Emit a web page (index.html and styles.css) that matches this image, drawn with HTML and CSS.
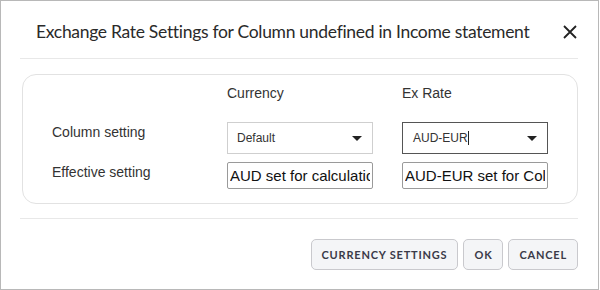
FILE: index.html
```html
<!DOCTYPE html>
<html lang="en">
<head>
    <meta charset="UTF-8">
    <title>Exchange Rate Settings</title>
    <link rel="stylesheet" href="styles.css">
</head>
<body>
    <div class="dialog">
        <div class="dialog-header">
            <h1>Exchange Rate Settings for Column undefined in Income statement</h1>
            <button class="close-btn" aria-label="Close">
                <svg width="14" height="14" viewBox="0 0 14 14">
                    <path d="M1 1 L13 13 M13 1 L1 13" stroke="#222" stroke-width="1.8" fill="none"/>
                </svg>
            </button>
        </div>

        <div class="panel">
            <div class="grid">
                <div></div>
                <div class="col-title">Currency</div>
                <div class="col-title">Ex Rate</div>

                <div class="row-label">Column setting</div>
                <div class="select">
                    <span>Default</span>
                    <span class="caret"></span>
                </div>
                <div class="select focused">
                    <span>AUD-EUR<i class="cursor"></i></span>
                    <span class="caret"></span>
                </div>

                <div class="row-label">Effective setting</div>
                <input class="field" type="text" value="AUD set for calculation" readonly>
                <input class="field" type="text" value="AUD-EUR set for Column" readonly>
            </div>
        </div>

        <div class="dialog-footer">
            <button class="btn">CURRENCY SETTINGS</button>
            <button class="btn">OK</button>
            <button class="btn">CANCEL</button>
        </div>
    </div>
</body>
</html>
```

FILE: styles.css
```css
* {
    margin: 0;
    padding: 0;
    box-sizing: border-box;
}

body {
    background: #ffffff;
    font-family: "Liberation Sans", Arial, sans-serif;
    color: #333333;
}

.dialog {
    width: 599px;
    height: 290px;
    border: 1px solid #b8b8b8;
    padding: 0 20px 0 19px;
    background: #ffffff;
}

.dialog-header {
    height: 58px;
    border-bottom: 1px solid #e8e8e8;
    display: flex;
    align-items: center;
    justify-content: space-between;
    padding: 0 1px 0 16px;
}

.dialog-header h1 {
    font-family: Lato, "Open Sans", sans-serif;
    font-weight: 400;
    font-size: 17.5px;
    letter-spacing: -0.3px;
    color: #2a2a2a;
    margin-top: 4px;
}

.close-btn {
    background: none;
    border: none;
    width: 14px;
    height: 14px;
    margin-top: 4px;
    cursor: pointer;
}

.panel {
    margin: 15px 0 14px 2px;
    height: 130px;
    border: 1px solid #e2e2e2;
    border-radius: 14px;
    padding: 8px 0 0 29px;
}

.grid {
    display: grid;
    grid-template-columns: 146px 146px 146px;
    grid-template-rows: 31px 32px 27px;
    column-gap: 29px;
    row-gap: 8px;
}

.col-title,
.row-label {
    font-size: 14px;
    line-height: 20px;
    color: #333333;
}

.select {
    display: flex;
    align-items: center;
    justify-content: space-between;
    border: 1px solid #cfcfcf;
    padding: 0 10px 0 9px;
    font-size: 12px;
    color: #333333;
    background: #ffffff;
}

.select.focused {
    border-color: #555555;
    padding-left: 10px;
}

.caret {
    width: 0;
    height: 0;
    border-left: 5px solid transparent;
    border-right: 5px solid transparent;
    border-top: 5px solid #222222;
    margin-top: 1px;
}

.cursor {
    display: inline-block;
    width: 1px;
    height: 14px;
    background: #222222;
    vertical-align: -3px;
}

.field {
    width: 146px;
    height: 27px;
    border: 1px solid #9a9a9a;
    border-radius: 2px;
    padding: 0 2px;
    font-family: "Liberation Sans", Arial, sans-serif;
    font-size: 15px;
    color: #111111;
    outline: none;
}

.dialog-footer {
    border-top: 1px solid #e8e8e8;
    display: flex;
    justify-content: flex-end;
    gap: 5px;
    padding-top: 20px;
}

.btn {
    height: 31px;
    padding: 0 10px;
    background: #f4f5f7;
    border: 1px solid #c9c9cd;
    border-radius: 5px;
    font-family: Lato, "Open Sans", sans-serif;
    font-weight: 700;
    font-size: 11px;
    letter-spacing: 0.8px;
    color: #3a3a48;
    cursor: pointer;
}
```
